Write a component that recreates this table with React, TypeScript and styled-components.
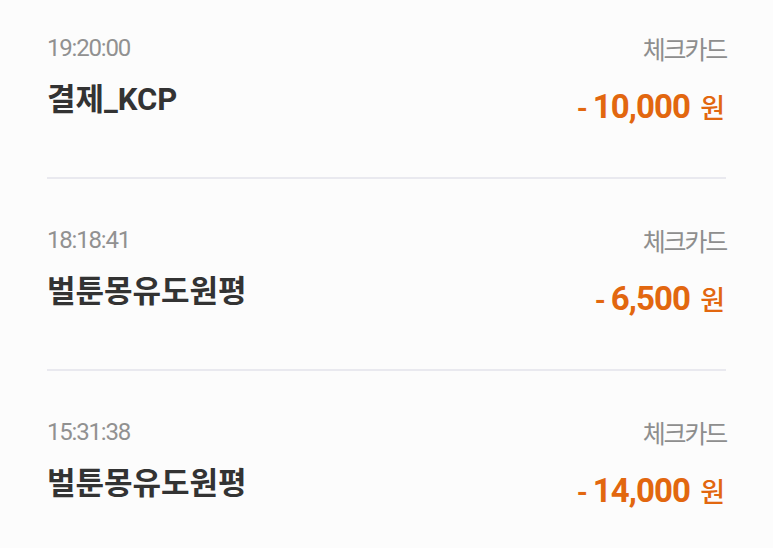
import React from "react";
import styled, { createGlobalStyle } from "styled-components";

const Global = createGlobalStyle`
  html, body { margin: 0; padding: 0; background: #fcfcfc; }
  body { font-family: Roboto, "Noto Sans CJK KR", sans-serif; -webkit-font-smoothing: antialiased; }
`;

const List = styled.div`
  padding: 0 47px;
  background: #fcfcfc;
  min-height: 548px;
  box-sizing: border-box;
`;

const Item = styled.div<{ $first?: boolean; $last?: boolean }>`
  display: flex;
  flex-direction: column;
  padding-top: ${(p) => (p.$first ? 33 : 46)}px;
  padding-bottom: 48px;
  border-bottom: ${(p) => (p.$last ? "none" : "2px solid #e9e9ef")};
`;

const TopRow = styled.div`
  display: flex;
  justify-content: space-between;
  align-items: center;
  height: 30px;
`;

const Time = styled.span`
  font-size: 24px;
  line-height: 30px;
  letter-spacing: -1.2px;
  color: #919191;
  font-family: Roboto, "Noto Sans CJK KR", sans-serif;
`;

const CardType = styled.span`
  font-size: 25px;
  line-height: 30px;
  letter-spacing: -2.2px;
  color: #8e8e8e;
  font-family: "Noto Sans CJK KR", sans-serif;
`;

const BottomRow = styled.div`
  display: flex;
  justify-content: space-between;
  align-items: flex-start;
  margin-top: 17px;
`;

const Title = styled.span`
  font-size: 31px;
  line-height: 40px;
  font-weight: 700;
  color: #333333;
  font-family: Roboto, "Noto Sans CJK KR", sans-serif;
`;

const Amount = styled.span`
  display: flex;
  align-items: baseline;
  padding-top: 7px;
  line-height: 40px;
  color: #e2670f;
`;

const Minus = styled.span`
  font-size: 28px;
  font-weight: 700;
  font-family: Roboto, sans-serif;
  margin-right: 5px;
`;

const Value = styled.span`
  font-size: 33px;
  font-weight: 700;
  font-family: Roboto, sans-serif;
  letter-spacing: -0.9px;
`;

const Unit = styled.span`
  font-size: 27px;
  font-weight: 500;
  font-family: "Noto Sans CJK KR", sans-serif;
  margin-left: 10px;
  margin-right: 1px;
`;

const items = [
  { time: "19:20:00", type: "체크카드", title: "결제_KCP", amount: "10,000" },
  { time: "18:18:41", type: "체크카드", title: "벌툰몽유도원평", amount: "6,500" },
  { time: "15:31:38", type: "체크카드", title: "벌툰몽유도원평", amount: "14,000" },
];

export default function App() {
  return (
    <>
      <Global />
      <List>
        {items.map((it, i) => (
          <Item key={i} $first={i === 0} $last={i === items.length - 1}>
            <TopRow>
              <Time>{it.time}</Time>
              <CardType>{it.type}</CardType>
            </TopRow>
            <BottomRow>
              <Title>{it.title}</Title>
              <Amount>
                <Minus>-</Minus>
                <Value>{it.amount}</Value>
                <Unit>원</Unit>
              </Amount>
            </BottomRow>
          </Item>
        ))}
      </List>
    </>
  );
}
